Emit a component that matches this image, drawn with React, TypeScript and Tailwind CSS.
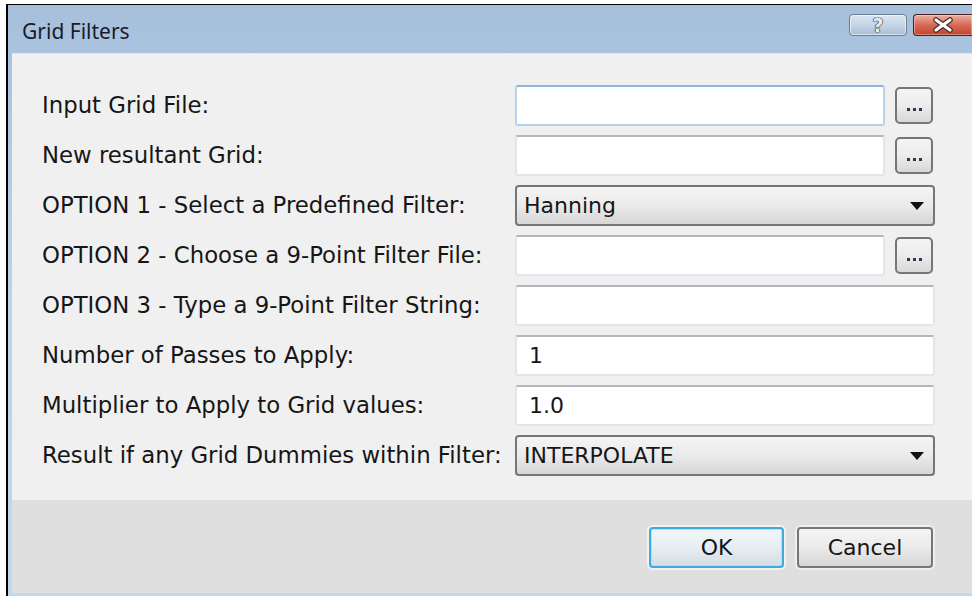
import React from "react";

const labelCls =
  "w-[473px] shrink-0 text-[22.8px] leading-none text-[#161616] font-['DejaVu_Sans',Verdana,sans-serif] whitespace-nowrap";

function TextBox({ value = "", focused = false, wide = false }: { value?: string; focused?: boolean; wide?: boolean }) {
  return (
    <div
      className={
        (wide ? "w-[420px] " : "w-[370px] ") +
        "h-[41px] shrink-0 rounded-[3px] bg-white flex items-center pl-[12px] text-[22px] leading-none text-[#161616] font-['DejaVu_Sans',Verdana,sans-serif] border-2 " +
        (focused
          ? "border-[#b6d2ea] border-t-[#8fb6db]"
          : "border-[#e1e6ec] border-t-[#b4b6bc]")
      }
    >
      {value}
    </div>
  );
}

function BrowseButton() {
  return (
    <div className="ml-[10px] w-[38px] h-[37px] shrink-0 rounded-[5px] border-2 border-[#767676] bg-gradient-to-b from-[#f4f4f4] via-[#ececec] to-[#d8d8d8] flex items-end justify-center pb-[11px] gap-[3px]">
      <span className="w-[3px] h-[3px] bg-[#3a2f5a]" />
      <span className="w-[3px] h-[3px] bg-[#3a2f5a]" />
      <span className="w-[3px] h-[3px] bg-[#3a2f5a]" />
    </div>
  );
}

function ComboBox({ value }: { value: string }) {
  return (
    <div className="w-[420px] h-[41px] shrink-0 rounded-[4px] border-2 border-[#767676] bg-gradient-to-b from-[#f4f4f4] via-[#ebebeb] to-[#d6d6d6] flex items-center justify-between pl-[7px] pr-[9px] text-[22px] leading-none text-[#161616] font-['DejaVu_Sans',Verdana,sans-serif]">
      <span>{value}</span>
      <svg width="14" height="8" viewBox="0 0 14 8">
        <path d="M0 0 L14 0 L7 8 Z" fill="#111" />
      </svg>
    </div>
  );
}

function Row({ label, children }: { label: string; children: React.ReactNode }) {
  return (
    <div className="h-[41px] flex items-center">
      <div className={labelCls}>{label}</div>
      {children}
    </div>
  );
}

export default function App() {
  return (
    <div className="w-[972px] h-[596px] bg-white overflow-hidden flex flex-col pt-[4px] pl-[6px]">
      <div className="flex-1 flex flex-col border-l-2 border-t border-black bg-gradient-to-b from-[#a6c0dc] via-[#bcd3ea] to-[#c2d8ee]">
        {/* Title bar */}
        <div className="h-[48px] shrink-0 flex items-start">
          <div className="flex-1 pl-[14px] pt-[16px] text-[21px] leading-none text-[#1a1a2a] font-['Noto_Sans',sans-serif]">
            Grid Filters
          </div>
          <div className="mt-[9px] w-[58px] h-[22px] rounded-[4px] border border-[#6c7e92] bg-gradient-to-b from-[#dbe6f1] via-[#c4d5e6] to-[#a9bed4] shadow-[inset_0_0_0_1px_rgba(255,255,255,0.55)] flex items-center justify-center">
            <span className="text-[19px] leading-none font-bold text-[#e6ebf0] font-['DejaVu_Sans',sans-serif] [text-shadow:0_0_1px_#36424f,0_0_1px_#36424f,0_0_1px_#36424f,0_0_1px_#36424f]">
              ?
            </span>
          </div>
          <div className="mt-[9px] ml-[6px] w-[59px] h-[22px] rounded-l-[4px] border border-r-0 border-[#4a1e22] bg-gradient-to-b from-[#eab0a3] via-[#d66a55] to-[#c2442b] shadow-[inset_0_0_0_1px_rgba(255,220,210,0.45)] flex items-center justify-center">
            <svg width="22" height="16" viewBox="0 0 22 16">
              <path d="M4 3 L18 13 M18 3 L4 13" stroke="#4a2a2a" strokeWidth="5.5" strokeLinecap="round" />
              <path d="M4 3 L18 13 M18 3 L4 13" stroke="#ffffff" strokeWidth="3.2" strokeLinecap="round" />
            </svg>
          </div>
        </div>

        {/* Client area */}
        <div className="flex-1 flex flex-col ml-[4px] mb-[3px]">
          <div className="h-[447px] shrink-0 bg-[#f0f0f0] pt-[31px] pl-[30px] flex flex-col gap-[9px] border-t border-[#dbe6f2]">
            <Row label="Input Grid File:">
              <TextBox focused />
              <BrowseButton />
            </Row>
            <Row label="New resultant Grid:">
              <TextBox />
              <BrowseButton />
            </Row>
            <Row label="OPTION 1 - Select a Predefined Filter:">
              <ComboBox value="Hanning" />
            </Row>
            <Row label="OPTION 2 - Choose a 9-Point Filter File:">
              <TextBox />
              <BrowseButton />
            </Row>
            <Row label="OPTION 3 - Type a 9-Point Filter String:">
              <TextBox wide />
            </Row>
            <Row label="Number of Passes to Apply:">
              <TextBox wide value="1" />
            </Row>
            <Row label="Multiplier to Apply to Grid values:">
              <TextBox wide value="1.0" />
            </Row>
            <Row label="Result if any Grid Dummies within Filter:">
              <ComboBox value="INTERPOLATE" />
            </Row>
          </div>

          {/* Button strip */}
          <div className="flex-1 bg-[#dfdfdf] flex justify-end items-start pt-[27px] pr-[39px] gap-[13px]">
            <button className="w-[135px] h-[41px] rounded-[4px] border-2 border-[#3fa9e0] bg-gradient-to-b from-[#f2f6f9] via-[#e6eef3] to-[#d4dde4] shadow-[0_0_0_2px_rgba(255,255,255,0.6),inset_0_0_0_1px_rgba(160,225,250,0.8)] text-[22px] leading-none text-[#161616] font-['DejaVu_Sans',Verdana,sans-serif]">
              OK
            </button>
            <button className="w-[136px] h-[41px] rounded-[4px] border-2 border-[#767676] bg-gradient-to-b from-[#f4f4f4] via-[#ebebeb] to-[#d6d6d6] shadow-[0_0_0_2px_rgba(255,255,255,0.5)] text-[22px] leading-none text-[#161616] font-['DejaVu_Sans',Verdana,sans-serif]">
              Cancel
            </button>
          </div>
        </div>
      </div>
    </div>
  );
}
